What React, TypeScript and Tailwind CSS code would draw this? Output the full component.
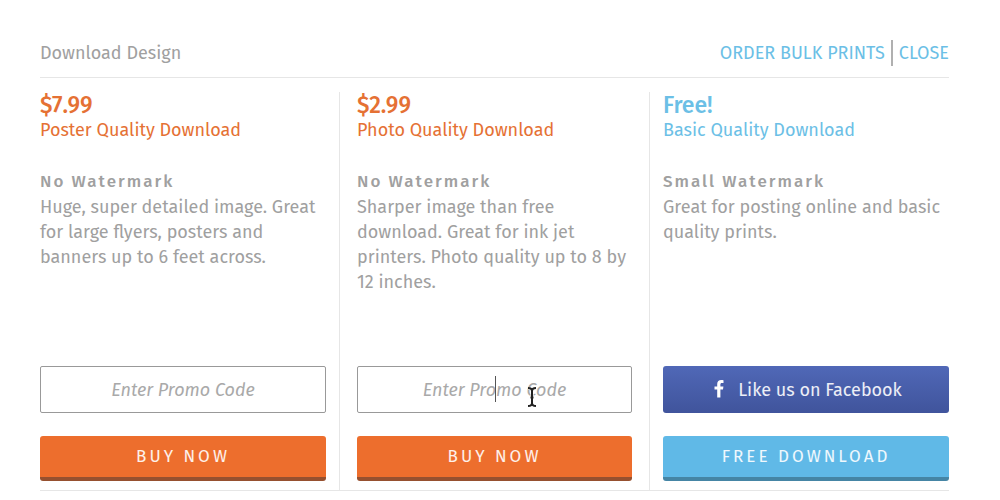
import React from 'react';

type Plan = {
  id: string;
  price: string;
  name: string;
  watermark: string;
  description: string;
  free?: boolean;
  active?: boolean;
  className: string;
};

const PLANS: Plan[] = [
  {
    id: 'poster',
    price: '$7.99',
    name: 'Poster Quality Download',
    watermark: 'No Watermark',
    description:
      'Huge, super detailed image. Great for large flyers, posters and banners up to 6 feet across.',
    className: 'border-r pr-[13px]',
  },
  {
    id: 'photo',
    price: '$2.99',
    name: 'Photo Quality Download',
    watermark: 'No Watermark',
    description:
      'Sharper image than free download. Great for ink jet printers. Photo quality up to 8 by 12 inches.',
    active: true,
    className: 'border-r px-[17px]',
  },
  {
    id: 'basic',
    price: 'Free!',
    name: 'Basic Quality Download',
    watermark: 'Small Watermark',
    description: 'Great for posting online and basic quality prints.',
    free: true,
    className: 'pl-[13px]',
  },
];

const App = () => {
  return (
    <main className="bg-white pt-10 pr-[51px] pl-10 font-['Fira_Sans','Noto_Sans',sans-serif] text-[18px] leading-[25px] text-[#a0a0a0]">
      <header className="flex items-center justify-between border-b border-[#e6e6e6] pb-[11px] leading-[26px]">
        <h1>Download Design</h1>
        <nav className="flex items-center text-[#6cbfe6]">
          <a href="#bulk" className="border-r-2 border-[#b0b0b0] pr-1.5">
            ORDER BULK PRINTS
          </a>
          <a href="#close" className="pl-1.5">
            CLOSE
          </a>
        </nav>
      </header>

      <div className="mt-3.5 grid grid-cols-[300fr_310fr_299fr] border-b border-[#e6e6e6]">
        {PLANS.map((plan) => (
          <PlanColumn key={plan.id} plan={plan} />
        ))}
      </div>
    </main>
  );
};

const PlanColumn = ({ plan }: { plan: Plan }) => {
  return (
    <section
      className={`flex flex-col border-[#e6e6e6] pb-[9px] ${plan.className}`}
    >
      <h2 className={plan.free ? 'text-[#6cbfe6]' : 'text-[#e57134]'}>
        <span className="block text-[23px] leading-[26px] font-medium">
          {plan.price}
        </span>
        {plan.name}
      </h2>

      <div className="mt-[26px] min-h-[197px] grow pb-6">
        <h3 className="text-[17px] leading-[26px] font-medium tracking-[2px]">
          {plan.watermark}
        </h3>
        <p>{plan.description}</p>
      </div>

      {plan.free ? <FacebookButton /> : <PromoField plan={plan} />}

      <button
        type="button"
        className={`mt-[23px] h-[45px] rounded-[3px] border-b-4 text-[17px] tracking-[3px] text-white/90 ${
          plan.free
            ? 'border-[#4585a5] bg-[#60b9e7]'
            : 'border-[#96502f] bg-[#ed6e2d]'
        }`}
      >
        {plan.free ? 'FREE DOWNLOAD' : 'BUY NOW'}
      </button>
    </section>
  );
};

const PromoField = ({ plan }: { plan: Plan }) => {
  return (
    <div className="relative">
      <input
        type="text"
        aria-label={`Promo code for ${plan.name}`}
        placeholder="Enter Promo Code"
        className="block h-[47px] w-full rounded-xs border border-[#999] px-3 text-center italic outline-none placeholder:text-[#a9a9a9]"
      />
      {plan.active && (
        <>
          <span className="pointer-events-none absolute top-2.5 left-1/2 h-[26px] w-px bg-[#555]" />
          <svg
            viewBox="0 0 10 20"
            className="pointer-events-none absolute top-[21px] left-1/2 ml-8 h-5 w-2.5"
            fill="none"
            aria-hidden="true"
          >
            <path
              d="M1 1C3 1 5 1.5 5 4V16C5 18.5 3 19 1 19M9 1C7 1 5 1.5 5 4M9 19C7 19 5 18.5 5 16M3.5 10.5H6.5"
              stroke="#fff"
              strokeWidth="3"
            />
            <path
              d="M1 1C3 1 5 1.5 5 4V16C5 18.5 3 19 1 19M9 1C7 1 5 1.5 5 4M9 19C7 19 5 18.5 5 16M3.5 10.5H6.5"
              stroke="#222"
              strokeWidth="2"
            />
          </svg>
        </>
      )}
    </div>
  );
};

const FacebookButton = () => {
  return (
    <button
      type="button"
      className="flex h-[47px] items-center justify-center gap-3.5 rounded-[3px] bg-linear-to-b from-[#5068b7] to-[#40549c] pt-0.5 pl-1 text-white/90"
    >
      <svg
        viewBox="0 0 10 18"
        className="mb-1 h-[18px] w-2.5 fill-white"
        aria-hidden="true"
      >
        <path d="M9.5 .2V3H7.9C6.7 3 6.4 3.6 6.4 4.5V6.4H9.4L9 9.4H6.4V17.5H3.2V9.4H.5V6.4H3.2V4.1C3.2 1.5 4.8 0 7.2 0C8.3 0 9.2 .1 9.5 .2Z" />
      </svg>
      Like us on Facebook
    </button>
  );
};

export default App;
